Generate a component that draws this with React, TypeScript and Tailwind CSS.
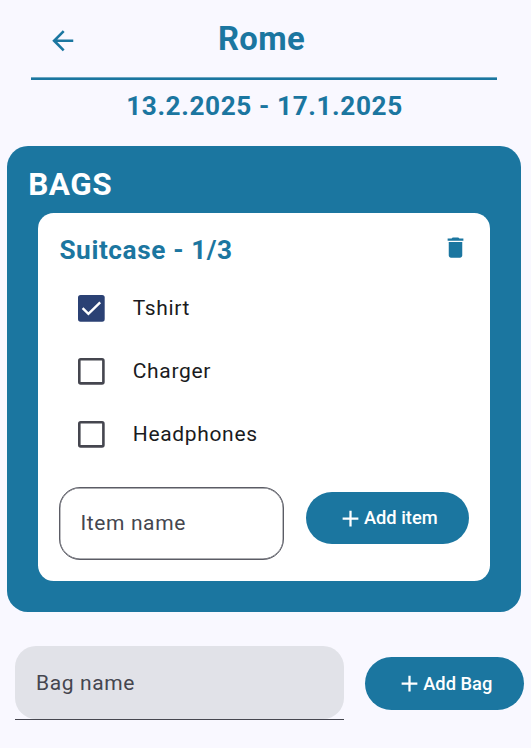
import React from "react";

const items = [
  { name: "Tshirt", packed: true },
  { name: "Charger", packed: false },
  { name: "Headphones", packed: false },
];

function BackIcon() {
  return (
    <svg viewBox="0 0 24 24" className="size-[31.5px] fill-current">
      <path d="M20 11H7.83l5.59-5.59L12 4l-8 8 8 8 1.41-1.41L7.83 13H20v-2z" />
    </svg>
  );
}

function DeleteIcon() {
  return (
    <svg viewBox="0 0 24 24" className="size-[27px] fill-current">
      <path d="M6 19c0 1.1.9 2 2 2h8c1.1 0 2-.9 2-2V7H6v12zM19 4h-3.5l-1-1h-5l-1 1H5v2h14V4z" />
    </svg>
  );
}

function AddIcon() {
  return (
    <svg viewBox="0 0 24 24" className="size-[27px] fill-current">
      <path d="M19 13h-6v6h-2v-6H5v-2h6V5h2v6h6v2z" />
    </svg>
  );
}

function Checkbox({ checked }: { checked: boolean }) {
  return (
    <svg viewBox="0 0 27 27" className="size-[27px]">
      {checked ? (
        <>
          <rect width="26.7" height="26.7" rx="2.6" fill="#2b4174" />
          <path d="M4.6 13.2l5.8 5.7L22.2 7.3" fill="none" stroke="white" strokeWidth="2.4" />
        </>
      ) : (
        <rect x="1.3" y="1.3" width="24.1" height="24.1" rx="1.4" fill="none" stroke="#45464f" strokeWidth="2.6" />
      )}
    </svg>
  );
}

export default function App() {
  return (
    <div className="flex h-[748px] w-[531px] flex-col overflow-hidden bg-[#f9f8ff] font-['Roboto','Liberation_Sans',sans-serif] text-[#1b76a0]">
      <header className="mr-[34px] ml-[31px] grid h-[77px] shrink-0 grid-cols-[48px_1fr_53px]">
        <button className="flex h-[81px] items-center pl-[16px]" aria-label="Back">
          <BackIcon />
        </button>
        <h1 className="text-center text-[32.8px] leading-[78px] font-bold tracking-[0.4px]">Rome</h1>
      </header>
      <div className="mr-[34px] ml-[31px] h-[3px] shrink-0 border-t border-[#6ca6c1] bg-[#1b76a0]" />
      <p className="h-[65.5px] shrink-0 pr-[2px] text-center text-[26.2px] leading-[52px] font-bold tracking-[0.6px]">
        13.2.2025 - 17.1.2025
      </p>

      <section className="mr-[10px] ml-[7px] h-[466.8px] shrink-0 rounded-[21px] bg-[#1b76a0] pr-[31.3px] pl-[31.4px]">
        <h2 className="-ml-[10.2px] h-[67.8px] text-[31.5px] leading-[77px] font-bold tracking-[0.5px] text-white">
          BAGS
        </h2>
        <div className="h-[367.7px] rounded-[15.75px] bg-white px-[21px]">
          <div className="flex h-[63.5px] justify-between">
            <h3 className="text-[26.2px] leading-[74px] font-bold tracking-[0.6px]">Suitcase - 1/3</h3>
            <button className="flex h-[69px] items-center" aria-label="Delete bag">
              <DeleteIcon />
            </button>
          </div>
          <ul>
            {items.map((item) => (
              <li key={item.name} className="flex h-[63px] items-center gap-[28px] pl-[18.4px]">
                <Checkbox checked={item.packed} />
                <span className="pt-px text-[21px] tracking-[0.66px] text-[#1a1b21]">{item.name}</span>
              </li>
            ))}
          </ul>
          <div className="flex items-start gap-[21.4px] pt-[21px]">
            <input
              aria-label="Item name"
              placeholder="Item name"
              className="h-[73px] w-[225px] rounded-[21px] border border-[#5b5c65] px-[20px] text-[21px] tracking-[0.63px] shadow-[inset_0_0_0_0.4px_#5b5c65] placeholder:text-[#45464f]"
            />
            <button className="mt-[5px] flex h-[52.5px] w-[163px] items-center justify-center rounded-full bg-[#1b76a0] text-[18.3px] font-medium text-white">
              <AddIcon />
              Add item
            </button>
          </div>
        </div>
      </section>

      <div className="mt-[34px] flex items-center gap-[21px] pl-[15px]">
        <div className="h-[73.5px] w-[329px] border-b-[1.3px] border-[#45464f]">
          <input
            aria-label="Bag name"
            placeholder="Bag name"
            className="h-full w-full rounded-[21px] bg-[#e1e2e8] px-[21px] pt-px text-[21px] tracking-[0.63px] placeholder:text-[#45464f]"
          />
        </div>
        <button className="mt-px flex h-[52.5px] w-[158.5px] items-center justify-center rounded-full bg-[#1b76a0] text-[18.3px] font-medium text-white">
          <AddIcon />
          Add Bag
        </button>
      </div>
    </div>
  );
}
